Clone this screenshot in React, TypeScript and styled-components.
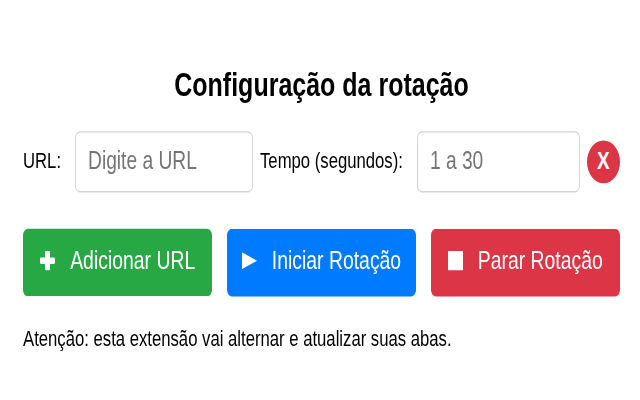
import React from "react";
import styled, { createGlobalStyle } from "styled-components";

const Global = createGlobalStyle`
  html, body { margin: 0; background: #fff; }
  body { font-family: "Liberation Sans", Arial, sans-serif; color: #000; }
`;

const Viewport = styled.div`
  width: 640px;
  height: 400px;
  overflow: hidden;
`;

const Page = styled.main`
  width: 640px;
  height: 308px;
  box-sizing: border-box;
  padding: 50.5px 20px 0 23px;
  transform: scaleY(1.3);
  transform-origin: top left;
  display: flex;
  flex-direction: column;
`;

const Title = styled.h2`
  margin: 0 0 22px;
  height: 28px;
  line-height: 28px;
  font-size: 25px;
  font-weight: 700;
  text-align: center;
`;

const FormRow = styled.div`
  display: flex;
  align-items: center;
  height: 47px;
`;

const Label = styled.label<{ $gap: number }>`
  font-size: 16.7px;
  margin-right: ${(p) => p.$gap}px;
  white-space: nowrap;
`;

const Field = styled.input<{ $w: number }>`
  width: ${(p) => p.$w}px;
  height: 47px;
  box-sizing: border-box;
  border: 1.5px solid #d4d4d4;
  border-radius: 5px;
  padding: 0 12px;
  font-family: inherit;
  font-size: 19.2px;
  margin-right: 7px;
  background: #fff;
  &::placeholder { color: #757575; opacity: 1; }
`;

const ClearButton = styled.button`
  width: 33px;
  height: 33px;
  padding: 0;
  border: 0;
  border-radius: 50%;
  background: #dc3545;
  color: #fff;
  font-family: inherit;
  font-size: 19px;
  font-weight: 700;
`;

const ButtonRow = styled.div`
  display: flex;
  justify-content: space-between;
  margin-top: 28.5px;
`;

const ActionButton = styled.button<{ $bg: string }>`
  width: 189.4px;
  height: 51.5px;
  border: 0;
  border-radius: 5px;
  background: ${(p) => p.$bg};
  color: #fff;
  font-family: inherit;
  font-size: 19.4px;
  display: flex;
  align-items: center;
  justify-content: center;
  gap: 15px;
  padding: 0 0 2px;
`;

const Note = styled.p`
  margin: 23.5px 0 0;
  font-size: 16.7px;
  line-height: 19px;
`;

const Plus = () => (
  <svg width="15" height="15" viewBox="0 0 15 15" fill="#fff">
    <path d="M5 1a1 1 0 0 1 1-1h3a1 1 0 0 1 1 1v4h4a1 1 0 0 1 1 1v3a1 1 0 0 1-1 1h-4v4a1 1 0 0 1-1 1H6a1 1 0 0 1-1-1v-4H1a1 1 0 0 1-1-1V6a1 1 0 0 1 1-1h4z" />
  </svg>
);
const Play = () => (
  <svg width="15" height="13" viewBox="0 0 15 13" fill="#fff">
    <path d="M0 0l15 6.5L0 13z" />
  </svg>
);
const Stop = () => (
  <svg width="15" height="15" viewBox="0 0 15 15" fill="#fff">
    <path d="M0 0h15v15H0z" />
  </svg>
);

export default function App() {
  return (
    <Viewport>
      <Global />
      <Page>
        <Title>Configuração da rotação</Title>
        <FormRow>
          <Label $gap={14}>URL:</Label>
          <Field $w={178} placeholder="Digite a URL" />
          <Label $gap={14}>Tempo (segundos):</Label>
          <Field $w={163} placeholder="1 a 30" />
          <ClearButton>X</ClearButton>
        </FormRow>
        <ButtonRow>
          <ActionButton $bg="#28a745"><Plus />Adicionar URL</ActionButton>
          <ActionButton $bg="#007bff"><Play />Iniciar Rotação</ActionButton>
          <ActionButton $bg="#dc3545"><Stop />Parar Rotação</ActionButton>
        </ButtonRow>
        <Note>Atenção: esta extensão vai alternar e atualizar suas abas.</Note>
      </Page>
    </Viewport>
  );
}
